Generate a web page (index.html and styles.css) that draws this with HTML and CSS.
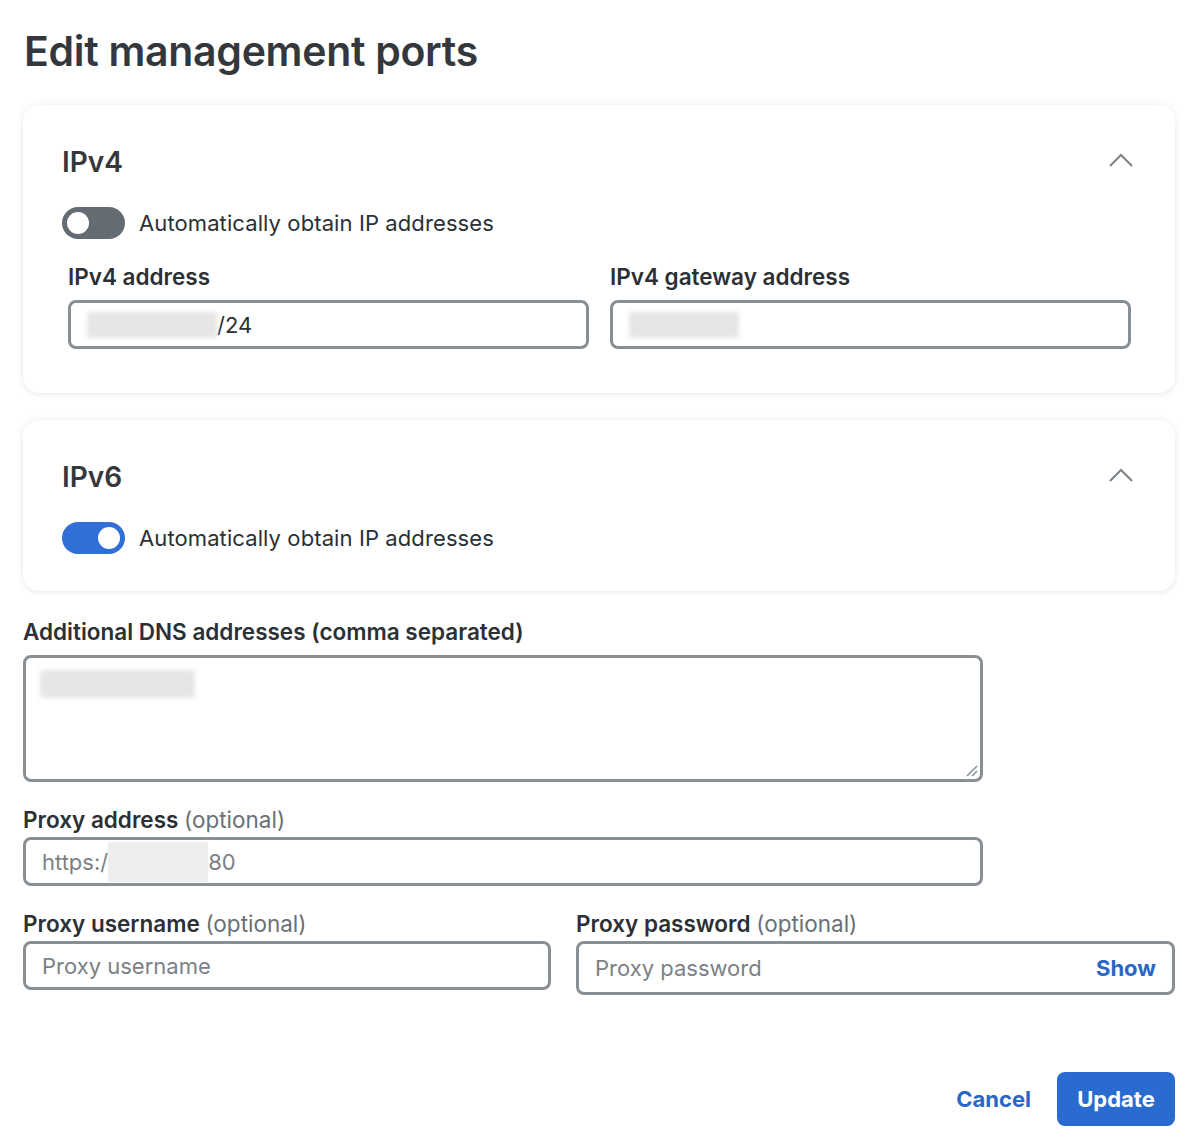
FILE: index.html
```html
<!DOCTYPE html>
<html>
<head>
<meta charset="utf-8">
<link rel="stylesheet" href="styles.css">
</head>
<body>
<div class="page">
  <h1 class="title">Edit management ports</h1>

  <section class="card">
    <div class="card-head">
      <h2 class="card-title">IPv4</h2>
      <svg class="chev" width="24" height="14" viewBox="0 0 24 14"><path d="M1 13 L12 2 L23 13" fill="none" stroke="#7c8288" stroke-width="2"/></svg>
    </div>
    <div class="toggle-row">
      <span class="toggle off"><span class="knob"></span></span>
      <span class="toggle-label">Automatically obtain IP addresses</span>
    </div>
    <div class="grid2 inset">
      <div class="field">
        <label class="label">IPv4 address</label>
        <div class="input"><span class="blur w130"></span><span class="val">/24</span></div>
      </div>
      <div class="field">
        <label class="label">IPv4 gateway address</label>
        <div class="input"><span class="blur w110"></span></div>
      </div>
    </div>
  </section>

  <section class="card card2">
    <div class="card-head">
      <h2 class="card-title">IPv6</h2>
      <svg class="chev" width="24" height="14" viewBox="0 0 24 14"><path d="M1 13 L12 2 L23 13" fill="none" stroke="#7c8288" stroke-width="2"/></svg>
    </div>
    <div class="toggle-row">
      <span class="toggle on"><span class="knob"></span></span>
      <span class="toggle-label">Automatically obtain IP addresses</span>
    </div>
  </section>

  <div class="field wide dns">
    <label class="label">Additional DNS addresses (comma separated)</label>
    <div class="textarea">
      <span class="blur w155 tall"></span>
      <svg class="grip" width="14" height="14" viewBox="0 0 14 14"><path d="M13 3 L3 13 M13 8 L8 13" stroke="#8a8f94" stroke-width="1.5"/></svg>
    </div>
  </div>

  <div class="field wide proxy">
    <label class="label">Proxy address <span class="opt">(optional)</span></label>
    <div class="input"><span class="ph">https:/</span><span class="blur w100 flat"></span><span class="ph">80</span></div>
  </div>

  <div class="grid2 creds">
    <div class="field">
      <label class="label">Proxy username <span class="opt">(optional)</span></label>
      <div class="input"><span class="ph">Proxy username</span></div>
    </div>
    <div class="field">
      <label class="label">Proxy password <span class="opt">(optional)</span></label>
      <div class="input pw"><span class="ph">Proxy password</span><span class="show">Show</span></div>
    </div>
  </div>

  <div class="actions">
    <button class="btn-link">Cancel</button>
    <button class="btn-primary">Update</button>
  </div>
</div>
</body>
</html>
```
FILE: styles.css
```css
* { box-sizing: border-box; }
html, body { margin: 0; background: #fff; }
body { font-family: Inter, "Liberation Sans", sans-serif; color: #2b3035; }
.page { padding: 24px 19px 0 23px; width: 1194px; }
.title {
  margin: 0 0 0 1px;
  font-size: 41px;
  font-weight: 600;
  color: #34383c;
  letter-spacing: -0.3px;
  line-height: 54px;
}
.card {
  margin-top: 27px;
  background: #fff;
  border-radius: 16px;
  box-shadow: 0 0 8px rgba(0,0,0,0.07), 0 2px 4px rgba(0,0,0,0.04);
  padding: 34px 42px 44px 39px;
  height: 288px;
}
.card2 { margin-top: 27px; height: 171px; }
.card-head { display: flex; justify-content: space-between; align-items: center; height: 46px; }
.card-title { margin: 0; font-size: 28px; font-weight: 600; color: #34383c; }
.chev { margin-top: -4px; }
.toggle-row { display: flex; align-items: center; gap: 14px; margin-top: 22px; }
.toggle { width: 63px; height: 32px; border-radius: 16px; position: relative; display: inline-block; }
.toggle.off { background: #646b73; }
.toggle.on { background: #2f6fd6; }
.knob { position: absolute; top: 5px; width: 22px; height: 22px; border-radius: 50%; background: #fff; }
.toggle.off .knob { left: 5px; }
.toggle.on .knob { right: 5px; }
.toggle-label { font-size: 22px; color: #2b3035; letter-spacing: 0.1px; }
.grid2 { display: grid; grid-template-columns: 1fr 1fr; column-gap: 21px; }
.inset { margin-top: 25px; padding-left: 6px; padding-right: 2px; }
.field { display: flex; flex-direction: column; }
.label { font-size: 22.5px; font-weight: 600; color: #2b3035; line-height: 26px; margin-bottom: 10px; }
.opt { font-weight: 400; color: #6a7075; }
.input {
  height: 49px;
  border: 3px solid #8a8f94;
  border-radius: 8px;
  display: flex;
  align-items: center;
  padding: 0 16px;
  font-size: 22px;
}
.val { color: #2b3035; }
.ph { color: #7b8186; }
.blur { display: inline-block; height: 26px; background: #e6e6e6; filter: blur(2px); border-radius: 2px; }
.blur.flat { filter: none; background: #eeeeee; height: 40px; }
.w130 { width: 130px; }
.w110 { width: 110px; }
.w155 { width: 155px; }
.w100 { width: 100px; }
.tall { height: 28px; }
.wide { width: 960px; }
.dns { margin-top: 28px; }
.textarea {
  position: relative;
  height: 127px;
  border: 3px solid #8a8f94;
  border-radius: 8px;
  padding: 12px 14px;
}
.grip { position: absolute; right: 2px; bottom: 2px; }
.proxy { margin-top: 25px; }
.proxy .label, .creds .label { margin-bottom: 4px; }
.proxy .input { height: 49px; }
.creds { margin-top: 25px; column-gap: 25px; grid-template-columns: 528px 1fr; }
.input.pw { height: 54px; justify-content: space-between; padding-right: 16px; }
.show { color: #2a66c4; font-weight: 700; font-size: 22px; }
.actions { display: flex; justify-content: flex-end; align-items: center; gap: 26px; margin-top: 77px; }
.btn-link { background: none; border: none; color: #2a66c4; font: 700 22px Inter, "Liberation Sans", sans-serif; padding: 0; }
.btn-primary {
  background: #2a6bd0;
  color: #fff;
  border: none;
  border-radius: 8px;
  height: 54px;
  width: 118px;
  font: 700 22px Inter, "Liberation Sans", sans-serif;
}
```
